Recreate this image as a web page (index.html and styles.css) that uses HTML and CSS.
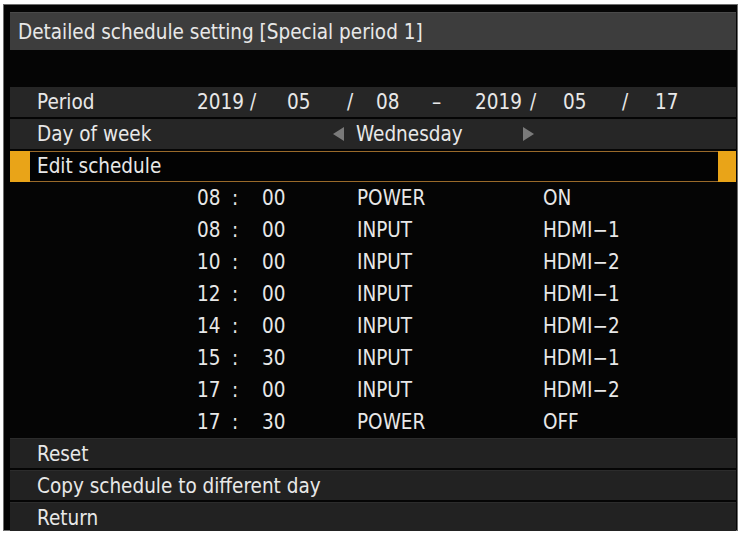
FILE: index.html
```html
<!DOCTYPE html>
<html lang="en">
<head>
    <meta charset="UTF-8">
    <title>Detailed schedule setting</title>
    <link rel="stylesheet" href="styles.css">
</head>
<body>

    <div class="screen">
        <div class="title">Detailed schedule setting [Special period 1]</div>

        <div class="menu">
            <div class="row period">
                <span>Period</span>
                <span>2019</span><span>/</span><span>05</span><span>/</span><span>08</span>
                <span>&ndash;</span>
                <span>2019</span><span>/</span><span>05</span><span>/</span><span>17</span>
            </div>

            <div class="row weekday">
                <span>Day of week</span>
                <span class="arrow left"></span>
                <span>Wednesday</span>
                <span class="arrow right"></span>
            </div>

            <div class="row selected">
                <span>Edit schedule</span>
            </div>

            <div class="entries">
                <div class="entry"><span></span><span>08</span><span>:</span><span>00</span><span>POWER</span><span>ON</span></div>
                <div class="entry"><span></span><span>08</span><span>:</span><span>00</span><span>INPUT</span><span>HDMI&minus;1</span></div>
                <div class="entry"><span></span><span>10</span><span>:</span><span>00</span><span>INPUT</span><span>HDMI&minus;2</span></div>
                <div class="entry"><span></span><span>12</span><span>:</span><span>00</span><span>INPUT</span><span>HDMI&minus;1</span></div>
                <div class="entry"><span></span><span>14</span><span>:</span><span>00</span><span>INPUT</span><span>HDMI&minus;2</span></div>
                <div class="entry"><span></span><span>15</span><span>:</span><span>30</span><span>INPUT</span><span>HDMI&minus;1</span></div>
                <div class="entry"><span></span><span>17</span><span>:</span><span>00</span><span>INPUT</span><span>HDMI&minus;2</span></div>
                <div class="entry"><span></span><span>17</span><span>:</span><span>30</span><span>POWER</span><span>OFF</span></div>
            </div>

            <div class="row action">Reset</div>
            <div class="row action">Copy schedule to different day</div>
            <div class="row action">Return</div>
        </div>
    </div>

</body>
</html>
```

FILE: styles.css
```css
body {
    margin: 4px 2px 3px 3px;
    background: #ffffff;
    font-family: "DejaVu Sans Condensed", "DejaVu Sans", sans-serif;
    font-size: 20.5px;
    color: #e8e8e8;
}

.screen {
    height: 527px;
    box-sizing: border-box;
    border: 1px solid #6e6e6e;
    background: #050505;
    padding: 7px 1px 3px 6px;
}

.title {
    height: 38px;
    line-height: 38px;
    padding-left: 8px;
    background: #3d3d3d;
    border-top: 1px solid #4a4a4a;
    box-sizing: border-box;
}

.menu {
    margin-top: 37px;
    display: flex;
    flex-direction: column;
}

.row {
    height: 30px;
    line-height: 30px;
    padding-left: 27px;
    background: #262626;
    margin-bottom: 2px;
    white-space: nowrap;
}

.period {
    display: grid;
    grid-template-columns: 160px 53px 37px 60px 29px 56px 43px 55px 33px 59px 33px auto;
}

.weekday {
    display: grid;
    grid-template-columns: 296px 23px 167px auto;
    align-items: center;
}

.arrow {
    width: 0;
    height: 0;
    border-top: 7px solid transparent;
    border-bottom: 7px solid transparent;
}

.arrow.left {
    border-right: 11px solid #7a7a7a;
}

.arrow.right {
    border-left: 11px solid #7a7a7a;
}

/* highlighted item with orange cursor blocks on both ends */
.row.selected {
    position: relative;
    height: 31px;
    line-height: 29px;
    background: #030303;
    border-top: 1px solid #9a6a2a;
    border-bottom: 1px solid #9a6a2a;
    box-sizing: border-box;
    margin-bottom: 0;
}

.row.selected::before,
.row.selected::after {
    content: "";
    position: absolute;
    top: -1px;
    bottom: -1px;
    background: #e9a418;
}

.row.selected::before {
    left: 0;
    width: 20px;
}

.row.selected::after {
    right: 0;
    width: 18px;
}

.entry {
    height: 32px;
    line-height: 32px;
    padding-left: 27px;
    display: grid;
    grid-template-columns: 160px 35px 30px 95px 186px auto;
}

.row.action {
    background: #222222;
    border-top: 1px solid #2c2c2c;
    box-sizing: border-box;
    height: 30px;
}

.row.action:last-child {
    margin-bottom: 0;
}
```
